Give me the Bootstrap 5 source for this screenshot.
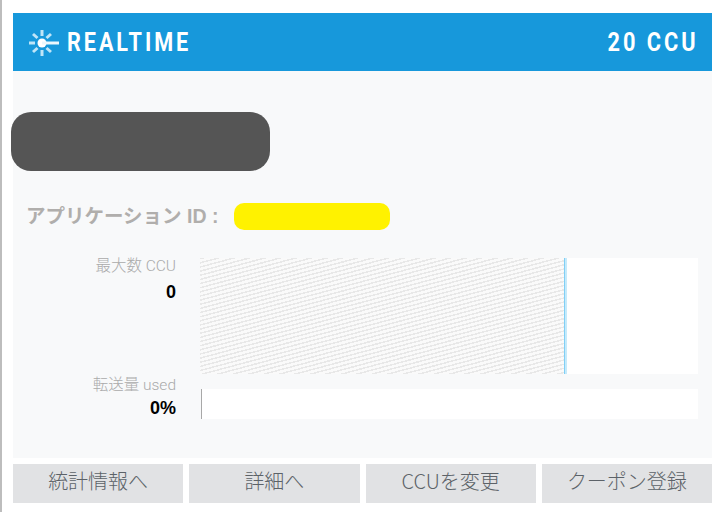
<!DOCTYPE html>
<html>
  <head>
    <title>Realtime</title>
    <link href="https://cdn.jsdelivr.net/npm/bootstrap@5.3.3/dist/css/bootstrap.min.css" rel="stylesheet" />
    <script src="https://cdn.jsdelivr.net/npm/bootstrap@5.3.3/dist/js/bootstrap.bundle.min.js"></script>
    <style>
      html, body { height: 100%; }
      body {
        background: #fff;
        font-family: "Liberation Sans", "Noto Sans CJK JP", sans-serif;
        overflow: hidden;
      }
      .page-frame {
        height: 512px;
        padding: 13px 10px 0 11px;
        border-left: 2px solid #bdbdbd;
      }
      .rt-head {
        height: 58px;
        background: #1798db;
        color: #fff;
        padding: 2px 14px 0 15px;
        font-family: Roboto, sans-serif;
        font-weight: 700;
        font-size: 25px;
        letter-spacing: 3.4px;
      }
      .squeeze-l { display: inline-block; transform: scaleX(.865); transform-origin: left center; }
      .squeeze-r { display: inline-block; transform: scaleX(.87); transform-origin: right center; }
      .rt-body {
        height: 387px;
        background: #f8f9fa;
        padding-top: 41px;
      }
      .mask-dark {
        width: 259px;
        height: 59px;
        margin-left: -2px;
        background: #555;
        border-radius: 20px;
      }
      .app-row {
        margin: 32px 0 0 13px;
        height: 27px;
        color: #b0aeac;
        font-size: 19.5px;
        font-weight: 700;
      }
      .mask-yellow {
        width: 156px;
        height: 27px;
        margin-left: 16px;
        background: #fff200;
        border-radius: 10px;
      }
      .stat-row { padding-right: 14px; }
      .stat-one { margin-top: 28px; height: 116px; }
      .stat-two { margin-top: 15px; height: 30px; }
      .stat-text {
        width: 163px;
        text-align: right;
        font-family: Roboto, "Noto Sans CJK JP", sans-serif;
        font-size: 15.5px;
        font-weight: 300;
        color: #aaa;
        line-height: 16px;
      }
      .stat-two .stat-text { margin-top: -12px; }
      .stat-num {
        margin-top: 8px;
        color: #000;
        font-family: "Liberation Sans", sans-serif;
        font-size: 18px;
        font-weight: 700;
        line-height: 20px;
      }
      .stat-two .stat-num { margin-top: 5px; }
      .stat-bar { margin-left: 24px; background: #fff; }
      .hatch-fill {
        width: 365px;
        background: repeating-linear-gradient(165deg, #e8e8e8 0, #e8e8e8 1.5px, #fafafa 1.5px, #fafafa 4px);
        border-right: 1px solid #80cff5;
        box-shadow: 2px 0 0 #c5eafb;
      }
      .used-fill { width: 1px; background: #a8a8a8; }
      .stat-two .stat-bar { margin-left: 25px; }
      .foot-row { margin-top: 6px; gap: 6px; }
      .foot-btn {
        height: 39px;
        background: #e1e2e4;
        color: #5c6268;
        border: 0;
        border-radius: 0;
        padding: 0 0 5px;
        font-family: "Noto Sans CJK JP", sans-serif;
        font-size: 20px;
        font-weight: 300;
        line-height: 30px;
      }
    </style>
  </head>
  <body>
    <div class="page-frame">
      <div class="rt-head d-flex align-items-center justify-content-between">
        <div class="d-flex align-items-center gap-2">
          <svg width="31" height="28" viewBox="0 0 31 28">
            <g stroke="#bfe5f8" stroke-width="3" fill="none">
              <path d="M14 1v6M14 21v6M1 14h6M5 5l4.500 4M23 5l-4.500 4M5 23l4.500-4M23 23l-4.500-4" />
            </g>
            <circle cx="14" cy="14" r="4.500" fill="#fff" />
            <path d="M14 12.500h17v3H14z" fill="#eaf7fd" />
          </svg>
          <span class="squeeze-l">REALTIME</span>
        </div>
        <span class="squeeze-r">20 CCU</span>
      </div>
      <div class="rt-body">
        <div class="mask-dark"></div>
        <div class="app-row d-flex align-items-center">
          <span>アプリケーション ID :</span>
          <div class="mask-yellow"></div>
        </div>
        <div class="stat-row stat-one d-flex">
          <div class="stat-text">
            最大数 CCU
            <div class="stat-num">0</div>
          </div>
          <div class="stat-bar flex-grow-1 d-flex"><div class="hatch-fill"></div></div>
        </div>
        <div class="stat-row stat-two d-flex">
          <div class="stat-text">
            転送量 used
            <div class="stat-num">0%</div>
          </div>
          <div class="stat-bar flex-grow-1 d-flex"><div class="used-fill"></div></div>
        </div>
      </div>
      <div class="foot-row d-flex">
        <button type="button" class="btn foot-btn flex-fill w-25">統計情報へ</button>
        <button type="button" class="btn foot-btn flex-fill w-25">詳細へ</button>
        <button type="button" class="btn foot-btn flex-fill w-25">CCUを変更</button>
        <button type="button" class="btn foot-btn flex-fill w-25">クーポン登録</button>
      </div>
    </div>
  </body>
</html>
